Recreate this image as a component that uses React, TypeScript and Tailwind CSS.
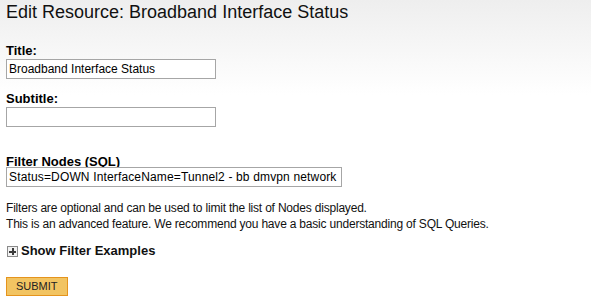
export default function App() {
  return (
    <div
      className="min-h-[307px] w-full bg-[linear-gradient(to_bottom,#eeeeee_0px,#ffffff_95px)] px-[6px] pt-[1px] text-black"
      style={{ fontFamily: '"Liberation Sans", Arial, sans-serif' }}
    >
      {/* Page heading */}
      <h1 className="text-[18px] leading-[22px] font-normal text-[#111]">
        Edit Resource: Broadband Interface Status
      </h1>

      <form className="flex flex-col" onSubmit={(e) => e.preventDefault()}>
        <label className="mt-[20px] text-[13px] leading-[15px] font-bold">Title:</label>
        <input
          type="text"
          defaultValue="Broadband Interface Status"
          className="mt-[1px] h-[20px] w-[210px] border border-[#a6a6a6] bg-white px-[2px] text-[12px] text-black outline-none"
        />

        <label className="mt-[12px] text-[13px] leading-[15px] font-bold">Subtitle:</label>
        <input
          type="text"
          defaultValue=""
          className="mt-[1px] h-[20px] w-[210px] border border-[#a6a6a6] bg-white px-[2px] text-[12px] text-black outline-none"
        />

        <label className="mt-[27px] text-[13px] leading-[15px] font-bold">Filter Nodes (SQL)</label>
        <input
          type="text"
          defaultValue="Status=DOWN InterfaceName=Tunnel2 - bb dmvpn network"
          className="mt-[-2px] h-[20px] w-[336px] border border-[#a6a6a6] bg-white px-[2px] text-[12px] tracking-[0.15px] text-black outline-none"
        />

        {/* Help text */}
        <p className="mt-[13px] text-[12px] leading-[16px] tracking-[-0.2px] text-[#111]">
          Filters are optional and can be used to limit the list of Nodes displayed.
          <br />
          This is an advanced feature. We recommend you have a basic understanding of SQL Queries.
        </p>

        {/* Toggle for examples */}
        <div className="mt-[11px] flex items-center gap-[3px]">
          <span className="relative ml-[1px] mt-[2px] inline-block h-[11px] w-[11px] border border-[#8a8a8a] bg-[#f2f2f2]">
            <span className="absolute left-[1px] top-[3.5px] h-[2px] w-[7px] bg-[#3a3a3a]" />
            <span className="absolute left-[3.5px] top-[1px] h-[7px] w-[2px] bg-[#3a3a3a]" />
          </span>
          <span className="text-[13px] leading-[15px] font-bold text-[#111]">Show Filter Examples</span>
        </div>

        <div className="mt-[15px]">
          <button
            type="submit"
            className="h-[19px] border border-[#e5941d] bg-[#f2c462] px-[9px] text-[11px] leading-[17px] text-[#222]"
          >
            SUBMIT
          </button>
        </div>
      </form>
    </div>
  )
}
